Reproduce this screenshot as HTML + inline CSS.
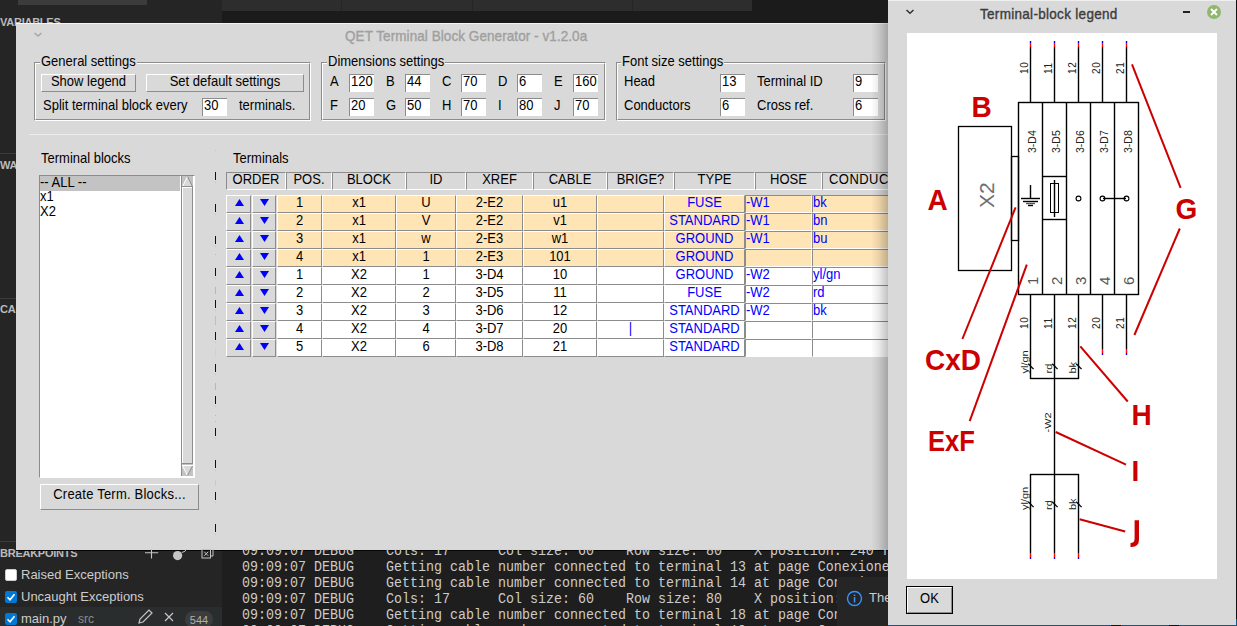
<!DOCTYPE html><html><head><meta charset="utf-8"><style>
html,body{margin:0;padding:0;}
body{width:1237px;height:626px;overflow:hidden;position:relative;background:#1e1e1e;font-family:"Liberation Sans",sans-serif;}
.a{position:absolute;box-sizing:content-box;}
.t{white-space:pre;font-size:13px;line-height:15px;color:#000;transform:scaleY(1.09);transform-origin:0 12px;}
.ev{position:absolute;left:1px;top:-1px;font-size:13px;line-height:15px;white-space:pre;transform:scaleY(1.09);transform-origin:0 12px;}
.mono{font-family:"Liberation Mono",monospace;}
</style></head><body>

<div class="a" style="left:0px;top:0px;width:222px;height:626px;background:#252526;"></div>
<div class="a" style="left:18px;top:0px;width:129px;height:5px;background:#3c3c3c;"></div>
<div class="a" style="left:222px;top:0px;width:1015px;height:23px;background:#1b1b1b;"></div>
<div class="a" style="left:222px;top:0px;width:530px;height:11px;background:#2d2d2d;"></div>
<div class="a" style="left:341px;top:0px;width:1px;height:11px;background:#252526;"></div>
<div class="a" style="left:472px;top:0px;width:1px;height:11px;background:#252526;"></div>
<div class="a" style="left:632px;top:0px;width:1px;height:11px;background:#252526;"></div>
<div class="a" style="left:0px;top:153px;width:222px;height:1px;background:#3a3a3a;"></div>
<div class="a" style="left:0px;top:298px;width:222px;height:1px;background:#3a3a3a;"></div>
<div class="a" style="left:0px;top:541px;width:222px;height:1px;background:#3a3a3a;"></div>
<div class="a t" style="left:0px;top:15px;color:#bbbbbb;font-size:11px;font-weight:700;letter-spacing:-0.25px;transform:none;">VARIABLES</div>
<div class="a t" style="left:0px;top:158px;color:#bbbbbb;font-size:11px;font-weight:700;letter-spacing:-0.25px;transform:none;">WATCH</div>
<div class="a t" style="left:0px;top:302px;color:#bbbbbb;font-size:11px;font-weight:700;letter-spacing:-0.25px;transform:none;">CALL STACK</div>
<div class="a t" style="left:0px;top:546px;color:#bbbbbb;font-size:11px;font-weight:700;letter-spacing:-0.25px;transform:none;">BREAKPOINTS</div>
<div class="a" style="left:16px;top:23px;width:872px;height:527px;background:#d9d9d9;"></div>
<div class="a" style="left:16px;top:550px;width:872px;height:1px;background:#050505;"></div>
<svg class="a" style="left:32px;top:30px" width="12" height="9"><polyline points="2.5,3 6,6 9.5,3" fill="none" stroke="#a8a8a8" stroke-width="1.6"/></svg>
<div class="a" style="left:16px;top:23px;width:872px;height:1px;background:#f4f4f4;"></div>
<div class="a t" style="left:345px;top:29px;color:#a0a0a0;font-size:13.5px;letter-spacing:0.07px;-webkit-text-stroke:0.35px #a0a0a0;">QET Terminal Block Generator - v1.2.0a</div>
<div class="a" style="left:34px;top:62px;width:275px;height:57px;border-top:1px solid #8c8c8c;border-left:1px solid #8c8c8c;border-right:1px solid #fff;border-bottom:1px solid #fff;"></div>
<div class="a" style="left:35px;top:63px;width:273px;height:55px;border-top:1px solid #fff;border-left:1px solid #fff;border-right:1px solid #8c8c8c;border-bottom:1px solid #8c8c8c;"></div>
<div class="a" style="left:321px;top:62px;width:283px;height:57px;border-top:1px solid #8c8c8c;border-left:1px solid #8c8c8c;border-right:1px solid #fff;border-bottom:1px solid #fff;"></div>
<div class="a" style="left:322px;top:63px;width:281px;height:55px;border-top:1px solid #fff;border-left:1px solid #fff;border-right:1px solid #8c8c8c;border-bottom:1px solid #8c8c8c;"></div>
<div class="a" style="left:616px;top:62px;width:268px;height:57px;border-top:1px solid #8c8c8c;border-left:1px solid #8c8c8c;border-right:1px solid #fff;border-bottom:1px solid #fff;"></div>
<div class="a" style="left:617px;top:63px;width:266px;height:55px;border-top:1px solid #fff;border-left:1px solid #fff;border-right:1px solid #8c8c8c;border-bottom:1px solid #8c8c8c;"></div>
<div class="a t" style="left:40px;top:54px;background:#d9d9d9;padding:0 1px;">General settings</div>
<div class="a t" style="left:327px;top:54px;background:#d9d9d9;padding:0 1px;">Dimensions settings</div>
<div class="a t" style="left:621px;top:54px;background:#d9d9d9;padding:0 1px;">Font size settings</div>
<div class="a" style="left:41px;top:74px;width:93px;height:16px;background:#d9d9d9;border-top:1px solid #fff;border-left:1px solid #fff;border-right:1px solid #8c8c8c;border-bottom:1px solid #8c8c8c;"><span class="t a" style="left:0;right:0;top:-1px;text-align:center">Show legend</span></div>
<div class="a" style="left:146px;top:74px;width:156px;height:16px;background:#d9d9d9;border-top:1px solid #fff;border-left:1px solid #fff;border-right:1px solid #8c8c8c;border-bottom:1px solid #8c8c8c;"><span class="t a" style="left:0;right:0;top:-1px;text-align:center">Set default settings</span></div>
<div class="a t" style="left:43px;top:98px;">Split terminal block every</div>
<div class="a" style="left:202px;top:98px;width:24px;height:17px;background:#fff;border-top:1px solid #8c8c8c;border-left:1px solid #8c8c8c;"><span class="ev">30</span></div>
<div class="a t" style="left:239px;top:98px;">terminals.</div>
<div class="a t" style="left:330px;top:74px;">A</div>
<div class="a" style="left:349px;top:74px;width:24px;height:17px;background:#fff;border-top:1px solid #8c8c8c;border-left:1px solid #8c8c8c;"><span class="ev">120</span></div>
<div class="a t" style="left:386px;top:74px;">B</div>
<div class="a" style="left:405px;top:74px;width:24px;height:17px;background:#fff;border-top:1px solid #8c8c8c;border-left:1px solid #8c8c8c;"><span class="ev">44</span></div>
<div class="a t" style="left:442px;top:74px;">C</div>
<div class="a" style="left:461px;top:74px;width:24px;height:17px;background:#fff;border-top:1px solid #8c8c8c;border-left:1px solid #8c8c8c;"><span class="ev">70</span></div>
<div class="a t" style="left:498px;top:74px;">D</div>
<div class="a" style="left:517px;top:74px;width:24px;height:17px;background:#fff;border-top:1px solid #8c8c8c;border-left:1px solid #8c8c8c;"><span class="ev">6</span></div>
<div class="a t" style="left:554px;top:74px;">E</div>
<div class="a" style="left:573px;top:74px;width:24px;height:17px;background:#fff;border-top:1px solid #8c8c8c;border-left:1px solid #8c8c8c;"><span class="ev">160</span></div>
<div class="a t" style="left:330px;top:98px;">F</div>
<div class="a" style="left:349px;top:98px;width:24px;height:17px;background:#fff;border-top:1px solid #8c8c8c;border-left:1px solid #8c8c8c;"><span class="ev">20</span></div>
<div class="a t" style="left:386px;top:98px;">G</div>
<div class="a" style="left:405px;top:98px;width:24px;height:17px;background:#fff;border-top:1px solid #8c8c8c;border-left:1px solid #8c8c8c;"><span class="ev">50</span></div>
<div class="a t" style="left:442px;top:98px;">H</div>
<div class="a" style="left:461px;top:98px;width:24px;height:17px;background:#fff;border-top:1px solid #8c8c8c;border-left:1px solid #8c8c8c;"><span class="ev">70</span></div>
<div class="a t" style="left:498px;top:98px;">I</div>
<div class="a" style="left:517px;top:98px;width:24px;height:17px;background:#fff;border-top:1px solid #8c8c8c;border-left:1px solid #8c8c8c;"><span class="ev">80</span></div>
<div class="a t" style="left:554px;top:98px;">J</div>
<div class="a" style="left:573px;top:98px;width:24px;height:17px;background:#fff;border-top:1px solid #8c8c8c;border-left:1px solid #8c8c8c;"><span class="ev">70</span></div>
<div class="a t" style="left:624px;top:74px;">Head</div>
<div class="a" style="left:720px;top:74px;width:24px;height:17px;background:#fff;border-top:1px solid #8c8c8c;border-left:1px solid #8c8c8c;"><span class="ev">13</span></div>
<div class="a t" style="left:757px;top:74px;">Terminal ID</div>
<div class="a" style="left:853px;top:74px;width:24px;height:17px;background:#fff;border-top:1px solid #8c8c8c;border-left:1px solid #8c8c8c;"><span class="ev">9</span></div>
<div class="a t" style="left:624px;top:98px;">Conductors</div>
<div class="a" style="left:720px;top:98px;width:24px;height:17px;background:#fff;border-top:1px solid #8c8c8c;border-left:1px solid #8c8c8c;"><span class="ev">6</span></div>
<div class="a t" style="left:757px;top:98px;">Cross ref.</div>
<div class="a" style="left:853px;top:98px;width:24px;height:17px;background:#fff;border-top:1px solid #8c8c8c;border-left:1px solid #8c8c8c;"><span class="ev">6</span></div>
<div class="a" style="left:29px;top:134px;width:859px;height:1px;background:#ededed;"></div>
<div class="a t" style="left:41px;top:151px;">Terminal blocks</div>
<div class="a" style="left:39px;top:175px;width:154px;height:301px;border-top:1px solid #8c8c8c;border-left:1px solid #8c8c8c;border-right:1px solid #fff;border-bottom:1px solid #fff;background:#fff;"></div>
<div class="a" style="left:40px;top:176px;width:140px;height:15px;background:#c3c3c3;"></div>
<div class="a t" style="left:40px;top:175px;">-- ALL --</div>
<div class="a t" style="left:40px;top:189px;">x1</div>
<div class="a t" style="left:40px;top:204px;">X2</div>
<div class="a" style="left:181px;top:176px;width:1px;height:300px;background:#8c8c8c;"></div>
<div class="a" style="left:182px;top:176px;width:11px;height:300px;background:#c3c3c3;"></div>
<svg class="a" style="left:182px;top:176px" width="11" height="300" viewBox="0 0 11 300">
<polygon points="0.5,10 5.5,0.5 10.5,10" fill="#d9d9d9"/>
<polyline points="0.5,10.5 5.5,0.5" stroke="#fff" stroke-width="1" fill="none"/>
<polyline points="5.5,0.5 10.5,10.5" stroke="#8c8c8c" stroke-width="1" fill="none"/>
<line x1="0" y1="10.5" x2="11" y2="10.5" stroke="#8c8c8c" stroke-width="1"/>
<rect x="0" y="11" width="11" height="277" fill="#d9d9d9"/>
<line x1="0" y1="11.5" x2="11" y2="11.5" stroke="#fff"/>
<line x1="0.5" y1="11" x2="0.5" y2="288" stroke="#fff"/>
<line x1="10.5" y1="11" x2="10.5" y2="288" stroke="#8c8c8c"/>
<line x1="0" y1="287.5" x2="11" y2="287.5" stroke="#8c8c8c"/>
<line x1="0" y1="289.5" x2="11" y2="289.5" stroke="#fff"/>
<polygon points="0.5,290 10.5,290 5.5,299.5" fill="#d9d9d9"/>
<polyline points="0.5,290 5.5,299.5" stroke="#fff" fill="none"/>
<polyline points="10.5,290 5.5,299.5" stroke="#8c8c8c" fill="none"/>
</svg>
<div class="a" style="left:40px;top:484px;width:157px;height:24px;background:#d9d9d9;border-top:1px solid #fff;border-left:1px solid #fff;border-right:1px solid #8c8c8c;border-bottom:1px solid #8c8c8c;"><span class="t a" style="left:0;right:0;top:2px;text-align:center;letter-spacing:0.22px">Create Term. Blocks...</span></div>
<div class="a" style="left:215px;top:172px;width:1px;height:8px;background:#111;"></div>
<div class="a" style="left:215px;top:182px;width:1px;height:1px;background:#bdbdbd;"></div>
<div class="a" style="left:215px;top:204px;width:1px;height:8px;background:#111;"></div>
<div class="a" style="left:215px;top:214px;width:1px;height:1px;background:#bdbdbd;"></div>
<div class="a" style="left:215px;top:236px;width:1px;height:8px;background:#111;"></div>
<div class="a" style="left:215px;top:246px;width:1px;height:1px;background:#bdbdbd;"></div>
<div class="a" style="left:215px;top:268px;width:1px;height:8px;background:#111;"></div>
<div class="a" style="left:215px;top:278px;width:1px;height:1px;background:#bdbdbd;"></div>
<div class="a" style="left:215px;top:300px;width:1px;height:8px;background:#111;"></div>
<div class="a" style="left:215px;top:310px;width:1px;height:1px;background:#bdbdbd;"></div>
<div class="a" style="left:215px;top:332px;width:1px;height:8px;background:#111;"></div>
<div class="a" style="left:215px;top:342px;width:1px;height:1px;background:#bdbdbd;"></div>
<div class="a" style="left:215px;top:364px;width:1px;height:8px;background:#111;"></div>
<div class="a" style="left:215px;top:374px;width:1px;height:1px;background:#bdbdbd;"></div>
<div class="a" style="left:215px;top:396px;width:1px;height:8px;background:#111;"></div>
<div class="a" style="left:215px;top:406px;width:1px;height:1px;background:#bdbdbd;"></div>
<div class="a" style="left:215px;top:428px;width:1px;height:8px;background:#111;"></div>
<div class="a" style="left:215px;top:438px;width:1px;height:1px;background:#bdbdbd;"></div>
<div class="a" style="left:215px;top:460px;width:1px;height:8px;background:#111;"></div>
<div class="a" style="left:215px;top:470px;width:1px;height:1px;background:#bdbdbd;"></div>
<div class="a" style="left:215px;top:492px;width:1px;height:8px;background:#111;"></div>
<div class="a" style="left:215px;top:502px;width:1px;height:1px;background:#bdbdbd;"></div>
<div class="a" style="left:215px;top:524px;width:1px;height:8px;background:#111;"></div>
<div class="a" style="left:215px;top:534px;width:1px;height:1px;background:#bdbdbd;"></div>
<div class="a" style="left:215px;top:150px;width:1px;height:1px;background:#c4c4c4;"></div>
<div class="a" style="left:215px;top:254px;width:1px;height:1px;background:#c8b4a8;"></div>
<div class="a" style="left:215px;top:287px;width:1px;height:7px;background:#c2b2ac;"></div>
<div class="a" style="left:215px;top:316px;width:1px;height:9px;background:#b4c0d2;"></div>
<div class="a" style="left:215px;top:348px;width:1px;height:9px;background:#d4d2c4;"></div>
<div class="a" style="left:215px;top:383px;width:1px;height:7px;background:#c6b4ac;"></div>
<div class="a" style="left:215px;top:415px;width:1px;height:1px;background:#b8b8b8;"></div>
<div class="a" style="left:215px;top:421px;width:1px;height:1px;background:#b8b8b8;"></div>
<div class="a" style="left:215px;top:480px;width:1px;height:6px;background:#c0ccd8;"></div>
<div class="a t" style="left:233px;top:151px;">Terminals</div>
<div class="a" style="left:226px;top:172px;width:58px;height:16px;background:#d9d9d9;border-top:1px solid #8c8c8c;border-left:1px solid #8c8c8c;border-right:1px solid #fff;border-bottom:1px solid #fff;"><span class="t a" style="left:0;right:0;top:-1px;text-align:center">ORDER</span></div>
<div class="a" style="left:286px;top:172px;width:44px;height:16px;background:#d9d9d9;border-top:1px solid #8c8c8c;border-left:1px solid #8c8c8c;border-right:1px solid #fff;border-bottom:1px solid #fff;"><span class="t a" style="left:0;right:0;top:-1px;text-align:center">POS.</span></div>
<div class="a" style="left:332px;top:172px;width:72px;height:16px;background:#d9d9d9;border-top:1px solid #8c8c8c;border-left:1px solid #8c8c8c;border-right:1px solid #fff;border-bottom:1px solid #fff;"><span class="t a" style="left:0;right:0;top:-1px;text-align:center">BLOCK</span></div>
<div class="a" style="left:406px;top:172px;width:58px;height:16px;background:#d9d9d9;border-top:1px solid #8c8c8c;border-left:1px solid #8c8c8c;border-right:1px solid #fff;border-bottom:1px solid #fff;"><span class="t a" style="left:0;right:0;top:-1px;text-align:center">ID</span></div>
<div class="a" style="left:466px;top:172px;width:65px;height:16px;background:#d9d9d9;border-top:1px solid #8c8c8c;border-left:1px solid #8c8c8c;border-right:1px solid #fff;border-bottom:1px solid #fff;"><span class="t a" style="left:0;right:0;top:-1px;text-align:center">XREF</span></div>
<div class="a" style="left:533px;top:172px;width:72px;height:16px;background:#d9d9d9;border-top:1px solid #8c8c8c;border-left:1px solid #8c8c8c;border-right:1px solid #fff;border-bottom:1px solid #fff;"><span class="t a" style="left:0;right:0;top:-1px;text-align:center">CABLE</span></div>
<div class="a" style="left:607px;top:172px;width:65px;height:16px;background:#d9d9d9;border-top:1px solid #8c8c8c;border-left:1px solid #8c8c8c;border-right:1px solid #fff;border-bottom:1px solid #fff;"><span class="t a" style="left:0;right:0;top:-1px;text-align:center">BRIGE?</span></div>
<div class="a" style="left:674px;top:172px;width:79px;height:16px;background:#d9d9d9;border-top:1px solid #8c8c8c;border-left:1px solid #8c8c8c;border-right:1px solid #fff;border-bottom:1px solid #fff;"><span class="t a" style="left:0;right:0;top:-1px;text-align:center">TYPE</span></div>
<div class="a" style="left:755px;top:172px;width:65px;height:16px;background:#d9d9d9;border-top:1px solid #8c8c8c;border-left:1px solid #8c8c8c;border-right:1px solid #fff;border-bottom:1px solid #fff;"><span class="t a" style="left:0;right:0;top:-1px;text-align:center">HOSE</span></div>
<div class="a" style="left:822px;top:172px;width:77px;height:16px;background:#d9d9d9;border-top:1px solid #8c8c8c;border-left:1px solid #8c8c8c;border-right:1px solid #fff;border-bottom:1px solid #fff;"><span class="t a" style="left:6px;top:-1px;letter-spacing:0.45px">CONDUCTOR</span></div>
<div class="a" style="left:226px;top:195px;width:23px;height:16px;background:#d9d9d9;border-top:1px solid #fff;border-left:1px solid #fff;border-right:1px solid #8c8c8c;border-bottom:1px solid #8c8c8c;"><svg class="a" style="left:8px;top:3px" width="9" height="8"><polygon points="0,7 4.5,0 9,7" fill="#0000ff"/></svg></div>
<div class="a" style="left:252px;top:195px;width:22px;height:16px;background:#d9d9d9;border-top:1px solid #fff;border-left:1px solid #fff;border-right:1px solid #8c8c8c;border-bottom:1px solid #8c8c8c;"><svg class="a" style="left:7px;top:3px" width="9" height="8"><polygon points="0,0 9,0 4.5,7" fill="#0000ff"/></svg></div>
<div class="a" style="left:277px;top:195px;width:43px;height:16px;background:#ffe4b5;border-top:1px solid #fff;border-left:1px solid #fff;border-right:1px solid #8c8c8c;border-bottom:1px solid #8c8c8c;"><span class="t a" style="left:0;right:0;top:-1px;text-align:center;color:#000">1</span></div>
<div class="a" style="left:322px;top:195px;width:72px;height:16px;background:#ffe4b5;border-top:1px solid #fff;border-left:1px solid #fff;border-right:1px solid #8c8c8c;border-bottom:1px solid #8c8c8c;"><span class="t a" style="left:0;right:0;top:-1px;text-align:center;color:#000">x1</span></div>
<div class="a" style="left:396px;top:195px;width:58px;height:16px;background:#ffe4b5;border-top:1px solid #fff;border-left:1px solid #fff;border-right:1px solid #8c8c8c;border-bottom:1px solid #8c8c8c;"><span class="t a" style="left:0;right:0;top:-1px;text-align:center;color:#000">U</span></div>
<div class="a" style="left:456px;top:195px;width:65px;height:16px;background:#ffe4b5;border-top:1px solid #fff;border-left:1px solid #fff;border-right:1px solid #8c8c8c;border-bottom:1px solid #8c8c8c;"><span class="t a" style="left:0;right:0;top:-1px;text-align:center;color:#000">2-E2</span></div>
<div class="a" style="left:523px;top:195px;width:72px;height:16px;background:#ffe4b5;border-top:1px solid #fff;border-left:1px solid #fff;border-right:1px solid #8c8c8c;border-bottom:1px solid #8c8c8c;"><span class="t a" style="left:0;right:0;top:-1px;text-align:center;color:#000">u1</span></div>
<div class="a" style="left:597px;top:195px;width:65px;height:16px;background:#ffe4b5;border-top:1px solid #fff;border-left:1px solid #fff;border-right:1px solid #8c8c8c;border-bottom:1px solid #8c8c8c;"><span class="t a" style="left:0;right:0;top:-1px;text-align:center;color:#0000ff"></span></div>
<div class="a" style="left:664px;top:195px;width:79px;height:16px;background:#ffe4b5;border-top:1px solid #fff;border-left:1px solid #fff;border-right:1px solid #8c8c8c;border-bottom:1px solid #8c8c8c;"><span class="t a" style="left:0;right:0;top:-1px;text-align:center;color:#0000ff">FUSE</span></div>
<div class="a" style="left:745px;top:195px;width:65px;height:16px;background:#ffe4b5;border-top:1px solid #8c8c8c;border-left:1px solid #8c8c8c;border-right:1px solid #fff;border-bottom:1px solid #fff;"><span class="t a" style="left:0px;top:-1px;color:#0000ff">-W1</span></div>
<div class="a" style="left:812px;top:195px;width:87px;height:16px;background:#ffe4b5;border-top:1px solid #8c8c8c;border-left:1px solid #8c8c8c;border-right:1px solid #fff;border-bottom:1px solid #fff;"><span class="t a" style="left:0px;top:-1px;color:#0000ff">bk</span></div>
<div class="a" style="left:226px;top:213px;width:23px;height:16px;background:#d9d9d9;border-top:1px solid #fff;border-left:1px solid #fff;border-right:1px solid #8c8c8c;border-bottom:1px solid #8c8c8c;"><svg class="a" style="left:8px;top:3px" width="9" height="8"><polygon points="0,7 4.5,0 9,7" fill="#0000ff"/></svg></div>
<div class="a" style="left:252px;top:213px;width:22px;height:16px;background:#d9d9d9;border-top:1px solid #fff;border-left:1px solid #fff;border-right:1px solid #8c8c8c;border-bottom:1px solid #8c8c8c;"><svg class="a" style="left:7px;top:3px" width="9" height="8"><polygon points="0,0 9,0 4.5,7" fill="#0000ff"/></svg></div>
<div class="a" style="left:277px;top:213px;width:43px;height:16px;background:#ffe4b5;border-top:1px solid #fff;border-left:1px solid #fff;border-right:1px solid #8c8c8c;border-bottom:1px solid #8c8c8c;"><span class="t a" style="left:0;right:0;top:-1px;text-align:center;color:#000">2</span></div>
<div class="a" style="left:322px;top:213px;width:72px;height:16px;background:#ffe4b5;border-top:1px solid #fff;border-left:1px solid #fff;border-right:1px solid #8c8c8c;border-bottom:1px solid #8c8c8c;"><span class="t a" style="left:0;right:0;top:-1px;text-align:center;color:#000">x1</span></div>
<div class="a" style="left:396px;top:213px;width:58px;height:16px;background:#ffe4b5;border-top:1px solid #fff;border-left:1px solid #fff;border-right:1px solid #8c8c8c;border-bottom:1px solid #8c8c8c;"><span class="t a" style="left:0;right:0;top:-1px;text-align:center;color:#000">V</span></div>
<div class="a" style="left:456px;top:213px;width:65px;height:16px;background:#ffe4b5;border-top:1px solid #fff;border-left:1px solid #fff;border-right:1px solid #8c8c8c;border-bottom:1px solid #8c8c8c;"><span class="t a" style="left:0;right:0;top:-1px;text-align:center;color:#000">2-E2</span></div>
<div class="a" style="left:523px;top:213px;width:72px;height:16px;background:#ffe4b5;border-top:1px solid #fff;border-left:1px solid #fff;border-right:1px solid #8c8c8c;border-bottom:1px solid #8c8c8c;"><span class="t a" style="left:0;right:0;top:-1px;text-align:center;color:#000">v1</span></div>
<div class="a" style="left:597px;top:213px;width:65px;height:16px;background:#ffe4b5;border-top:1px solid #fff;border-left:1px solid #fff;border-right:1px solid #8c8c8c;border-bottom:1px solid #8c8c8c;"><span class="t a" style="left:0;right:0;top:-1px;text-align:center;color:#0000ff"></span></div>
<div class="a" style="left:664px;top:213px;width:79px;height:16px;background:#ffe4b5;border-top:1px solid #fff;border-left:1px solid #fff;border-right:1px solid #8c8c8c;border-bottom:1px solid #8c8c8c;"><span class="t a" style="left:0;right:0;top:-1px;text-align:center;color:#0000ff">STANDARD</span></div>
<div class="a" style="left:745px;top:213px;width:65px;height:16px;background:#ffe4b5;border-top:1px solid #8c8c8c;border-left:1px solid #8c8c8c;border-right:1px solid #fff;border-bottom:1px solid #fff;"><span class="t a" style="left:0px;top:-1px;color:#0000ff">-W1</span></div>
<div class="a" style="left:812px;top:213px;width:87px;height:16px;background:#ffe4b5;border-top:1px solid #8c8c8c;border-left:1px solid #8c8c8c;border-right:1px solid #fff;border-bottom:1px solid #fff;"><span class="t a" style="left:0px;top:-1px;color:#0000ff">bn</span></div>
<div class="a" style="left:226px;top:231px;width:23px;height:16px;background:#d9d9d9;border-top:1px solid #fff;border-left:1px solid #fff;border-right:1px solid #8c8c8c;border-bottom:1px solid #8c8c8c;"><svg class="a" style="left:8px;top:3px" width="9" height="8"><polygon points="0,7 4.5,0 9,7" fill="#0000ff"/></svg></div>
<div class="a" style="left:252px;top:231px;width:22px;height:16px;background:#d9d9d9;border-top:1px solid #fff;border-left:1px solid #fff;border-right:1px solid #8c8c8c;border-bottom:1px solid #8c8c8c;"><svg class="a" style="left:7px;top:3px" width="9" height="8"><polygon points="0,0 9,0 4.5,7" fill="#0000ff"/></svg></div>
<div class="a" style="left:277px;top:231px;width:43px;height:16px;background:#ffe4b5;border-top:1px solid #fff;border-left:1px solid #fff;border-right:1px solid #8c8c8c;border-bottom:1px solid #8c8c8c;"><span class="t a" style="left:0;right:0;top:-1px;text-align:center;color:#000">3</span></div>
<div class="a" style="left:322px;top:231px;width:72px;height:16px;background:#ffe4b5;border-top:1px solid #fff;border-left:1px solid #fff;border-right:1px solid #8c8c8c;border-bottom:1px solid #8c8c8c;"><span class="t a" style="left:0;right:0;top:-1px;text-align:center;color:#000">x1</span></div>
<div class="a" style="left:396px;top:231px;width:58px;height:16px;background:#ffe4b5;border-top:1px solid #fff;border-left:1px solid #fff;border-right:1px solid #8c8c8c;border-bottom:1px solid #8c8c8c;"><span class="t a" style="left:0;right:0;top:-1px;text-align:center;color:#000">w</span></div>
<div class="a" style="left:456px;top:231px;width:65px;height:16px;background:#ffe4b5;border-top:1px solid #fff;border-left:1px solid #fff;border-right:1px solid #8c8c8c;border-bottom:1px solid #8c8c8c;"><span class="t a" style="left:0;right:0;top:-1px;text-align:center;color:#000">2-E3</span></div>
<div class="a" style="left:523px;top:231px;width:72px;height:16px;background:#ffe4b5;border-top:1px solid #fff;border-left:1px solid #fff;border-right:1px solid #8c8c8c;border-bottom:1px solid #8c8c8c;"><span class="t a" style="left:0;right:0;top:-1px;text-align:center;color:#000">w1</span></div>
<div class="a" style="left:597px;top:231px;width:65px;height:16px;background:#ffe4b5;border-top:1px solid #fff;border-left:1px solid #fff;border-right:1px solid #8c8c8c;border-bottom:1px solid #8c8c8c;"><span class="t a" style="left:0;right:0;top:-1px;text-align:center;color:#0000ff"></span></div>
<div class="a" style="left:664px;top:231px;width:79px;height:16px;background:#ffe4b5;border-top:1px solid #fff;border-left:1px solid #fff;border-right:1px solid #8c8c8c;border-bottom:1px solid #8c8c8c;"><span class="t a" style="left:0;right:0;top:-1px;text-align:center;color:#0000ff">GROUND</span></div>
<div class="a" style="left:745px;top:231px;width:65px;height:16px;background:#ffe4b5;border-top:1px solid #8c8c8c;border-left:1px solid #8c8c8c;border-right:1px solid #fff;border-bottom:1px solid #fff;"><span class="t a" style="left:0px;top:-1px;color:#0000ff">-W1</span></div>
<div class="a" style="left:812px;top:231px;width:87px;height:16px;background:#ffe4b5;border-top:1px solid #8c8c8c;border-left:1px solid #8c8c8c;border-right:1px solid #fff;border-bottom:1px solid #fff;"><span class="t a" style="left:0px;top:-1px;color:#0000ff">bu</span></div>
<div class="a" style="left:226px;top:249px;width:23px;height:16px;background:#d9d9d9;border-top:1px solid #fff;border-left:1px solid #fff;border-right:1px solid #8c8c8c;border-bottom:1px solid #8c8c8c;"><svg class="a" style="left:8px;top:3px" width="9" height="8"><polygon points="0,7 4.5,0 9,7" fill="#0000ff"/></svg></div>
<div class="a" style="left:252px;top:249px;width:22px;height:16px;background:#d9d9d9;border-top:1px solid #fff;border-left:1px solid #fff;border-right:1px solid #8c8c8c;border-bottom:1px solid #8c8c8c;"><svg class="a" style="left:7px;top:3px" width="9" height="8"><polygon points="0,0 9,0 4.5,7" fill="#0000ff"/></svg></div>
<div class="a" style="left:277px;top:249px;width:43px;height:16px;background:#ffe4b5;border-top:1px solid #fff;border-left:1px solid #fff;border-right:1px solid #8c8c8c;border-bottom:1px solid #8c8c8c;"><span class="t a" style="left:0;right:0;top:-1px;text-align:center;color:#000">4</span></div>
<div class="a" style="left:322px;top:249px;width:72px;height:16px;background:#ffe4b5;border-top:1px solid #fff;border-left:1px solid #fff;border-right:1px solid #8c8c8c;border-bottom:1px solid #8c8c8c;"><span class="t a" style="left:0;right:0;top:-1px;text-align:center;color:#000">x1</span></div>
<div class="a" style="left:396px;top:249px;width:58px;height:16px;background:#ffe4b5;border-top:1px solid #fff;border-left:1px solid #fff;border-right:1px solid #8c8c8c;border-bottom:1px solid #8c8c8c;"><span class="t a" style="left:0;right:0;top:-1px;text-align:center;color:#000">1</span></div>
<div class="a" style="left:456px;top:249px;width:65px;height:16px;background:#ffe4b5;border-top:1px solid #fff;border-left:1px solid #fff;border-right:1px solid #8c8c8c;border-bottom:1px solid #8c8c8c;"><span class="t a" style="left:0;right:0;top:-1px;text-align:center;color:#000">2-E3</span></div>
<div class="a" style="left:523px;top:249px;width:72px;height:16px;background:#ffe4b5;border-top:1px solid #fff;border-left:1px solid #fff;border-right:1px solid #8c8c8c;border-bottom:1px solid #8c8c8c;"><span class="t a" style="left:0;right:0;top:-1px;text-align:center;color:#000">101</span></div>
<div class="a" style="left:597px;top:249px;width:65px;height:16px;background:#ffe4b5;border-top:1px solid #fff;border-left:1px solid #fff;border-right:1px solid #8c8c8c;border-bottom:1px solid #8c8c8c;"><span class="t a" style="left:0;right:0;top:-1px;text-align:center;color:#0000ff"></span></div>
<div class="a" style="left:664px;top:249px;width:79px;height:16px;background:#ffe4b5;border-top:1px solid #fff;border-left:1px solid #fff;border-right:1px solid #8c8c8c;border-bottom:1px solid #8c8c8c;"><span class="t a" style="left:0;right:0;top:-1px;text-align:center;color:#0000ff">GROUND</span></div>
<div class="a" style="left:745px;top:249px;width:65px;height:16px;background:#ffe4b5;border-top:1px solid #8c8c8c;border-left:1px solid #8c8c8c;border-right:1px solid #fff;border-bottom:1px solid #fff;"><span class="t a" style="left:0px;top:-1px;color:#0000ff"></span></div>
<div class="a" style="left:812px;top:249px;width:87px;height:16px;background:#ffe4b5;border-top:1px solid #8c8c8c;border-left:1px solid #8c8c8c;border-right:1px solid #fff;border-bottom:1px solid #fff;"><span class="t a" style="left:0px;top:-1px;color:#0000ff"></span></div>
<div class="a" style="left:226px;top:267px;width:23px;height:16px;background:#d9d9d9;border-top:1px solid #fff;border-left:1px solid #fff;border-right:1px solid #8c8c8c;border-bottom:1px solid #8c8c8c;"><svg class="a" style="left:8px;top:3px" width="9" height="8"><polygon points="0,7 4.5,0 9,7" fill="#0000ff"/></svg></div>
<div class="a" style="left:252px;top:267px;width:22px;height:16px;background:#d9d9d9;border-top:1px solid #fff;border-left:1px solid #fff;border-right:1px solid #8c8c8c;border-bottom:1px solid #8c8c8c;"><svg class="a" style="left:7px;top:3px" width="9" height="8"><polygon points="0,0 9,0 4.5,7" fill="#0000ff"/></svg></div>
<div class="a" style="left:277px;top:267px;width:43px;height:16px;background:#fff;border-top:1px solid #fff;border-left:1px solid #fff;border-right:1px solid #8c8c8c;border-bottom:1px solid #8c8c8c;"><span class="t a" style="left:0;right:0;top:-1px;text-align:center;color:#000">1</span></div>
<div class="a" style="left:322px;top:267px;width:72px;height:16px;background:#fff;border-top:1px solid #fff;border-left:1px solid #fff;border-right:1px solid #8c8c8c;border-bottom:1px solid #8c8c8c;"><span class="t a" style="left:0;right:0;top:-1px;text-align:center;color:#000">X2</span></div>
<div class="a" style="left:396px;top:267px;width:58px;height:16px;background:#fff;border-top:1px solid #fff;border-left:1px solid #fff;border-right:1px solid #8c8c8c;border-bottom:1px solid #8c8c8c;"><span class="t a" style="left:0;right:0;top:-1px;text-align:center;color:#000">1</span></div>
<div class="a" style="left:456px;top:267px;width:65px;height:16px;background:#fff;border-top:1px solid #fff;border-left:1px solid #fff;border-right:1px solid #8c8c8c;border-bottom:1px solid #8c8c8c;"><span class="t a" style="left:0;right:0;top:-1px;text-align:center;color:#000">3-D4</span></div>
<div class="a" style="left:523px;top:267px;width:72px;height:16px;background:#fff;border-top:1px solid #fff;border-left:1px solid #fff;border-right:1px solid #8c8c8c;border-bottom:1px solid #8c8c8c;"><span class="t a" style="left:0;right:0;top:-1px;text-align:center;color:#000">10</span></div>
<div class="a" style="left:597px;top:267px;width:65px;height:16px;background:#fff;border-top:1px solid #fff;border-left:1px solid #fff;border-right:1px solid #8c8c8c;border-bottom:1px solid #8c8c8c;"><span class="t a" style="left:0;right:0;top:-1px;text-align:center;color:#0000ff"></span></div>
<div class="a" style="left:664px;top:267px;width:79px;height:16px;background:#fff;border-top:1px solid #fff;border-left:1px solid #fff;border-right:1px solid #8c8c8c;border-bottom:1px solid #8c8c8c;"><span class="t a" style="left:0;right:0;top:-1px;text-align:center;color:#0000ff">GROUND</span></div>
<div class="a" style="left:745px;top:267px;width:65px;height:16px;background:#fff;border-top:1px solid #8c8c8c;border-left:1px solid #8c8c8c;border-right:1px solid #fff;border-bottom:1px solid #fff;"><span class="t a" style="left:0px;top:-1px;color:#0000ff">-W2</span></div>
<div class="a" style="left:812px;top:267px;width:87px;height:16px;background:#fff;border-top:1px solid #8c8c8c;border-left:1px solid #8c8c8c;border-right:1px solid #fff;border-bottom:1px solid #fff;"><span class="t a" style="left:0px;top:-1px;color:#0000ff">yl/gn</span></div>
<div class="a" style="left:226px;top:285px;width:23px;height:16px;background:#d9d9d9;border-top:1px solid #fff;border-left:1px solid #fff;border-right:1px solid #8c8c8c;border-bottom:1px solid #8c8c8c;"><svg class="a" style="left:8px;top:3px" width="9" height="8"><polygon points="0,7 4.5,0 9,7" fill="#0000ff"/></svg></div>
<div class="a" style="left:252px;top:285px;width:22px;height:16px;background:#d9d9d9;border-top:1px solid #fff;border-left:1px solid #fff;border-right:1px solid #8c8c8c;border-bottom:1px solid #8c8c8c;"><svg class="a" style="left:7px;top:3px" width="9" height="8"><polygon points="0,0 9,0 4.5,7" fill="#0000ff"/></svg></div>
<div class="a" style="left:277px;top:285px;width:43px;height:16px;background:#fff;border-top:1px solid #fff;border-left:1px solid #fff;border-right:1px solid #8c8c8c;border-bottom:1px solid #8c8c8c;"><span class="t a" style="left:0;right:0;top:-1px;text-align:center;color:#000">2</span></div>
<div class="a" style="left:322px;top:285px;width:72px;height:16px;background:#fff;border-top:1px solid #fff;border-left:1px solid #fff;border-right:1px solid #8c8c8c;border-bottom:1px solid #8c8c8c;"><span class="t a" style="left:0;right:0;top:-1px;text-align:center;color:#000">X2</span></div>
<div class="a" style="left:396px;top:285px;width:58px;height:16px;background:#fff;border-top:1px solid #fff;border-left:1px solid #fff;border-right:1px solid #8c8c8c;border-bottom:1px solid #8c8c8c;"><span class="t a" style="left:0;right:0;top:-1px;text-align:center;color:#000">2</span></div>
<div class="a" style="left:456px;top:285px;width:65px;height:16px;background:#fff;border-top:1px solid #fff;border-left:1px solid #fff;border-right:1px solid #8c8c8c;border-bottom:1px solid #8c8c8c;"><span class="t a" style="left:0;right:0;top:-1px;text-align:center;color:#000">3-D5</span></div>
<div class="a" style="left:523px;top:285px;width:72px;height:16px;background:#fff;border-top:1px solid #fff;border-left:1px solid #fff;border-right:1px solid #8c8c8c;border-bottom:1px solid #8c8c8c;"><span class="t a" style="left:0;right:0;top:-1px;text-align:center;color:#000">11</span></div>
<div class="a" style="left:597px;top:285px;width:65px;height:16px;background:#fff;border-top:1px solid #fff;border-left:1px solid #fff;border-right:1px solid #8c8c8c;border-bottom:1px solid #8c8c8c;"><span class="t a" style="left:0;right:0;top:-1px;text-align:center;color:#0000ff"></span></div>
<div class="a" style="left:664px;top:285px;width:79px;height:16px;background:#fff;border-top:1px solid #fff;border-left:1px solid #fff;border-right:1px solid #8c8c8c;border-bottom:1px solid #8c8c8c;"><span class="t a" style="left:0;right:0;top:-1px;text-align:center;color:#0000ff">FUSE</span></div>
<div class="a" style="left:745px;top:285px;width:65px;height:16px;background:#fff;border-top:1px solid #8c8c8c;border-left:1px solid #8c8c8c;border-right:1px solid #fff;border-bottom:1px solid #fff;"><span class="t a" style="left:0px;top:-1px;color:#0000ff">-W2</span></div>
<div class="a" style="left:812px;top:285px;width:87px;height:16px;background:#fff;border-top:1px solid #8c8c8c;border-left:1px solid #8c8c8c;border-right:1px solid #fff;border-bottom:1px solid #fff;"><span class="t a" style="left:0px;top:-1px;color:#0000ff">rd</span></div>
<div class="a" style="left:226px;top:303px;width:23px;height:16px;background:#d9d9d9;border-top:1px solid #fff;border-left:1px solid #fff;border-right:1px solid #8c8c8c;border-bottom:1px solid #8c8c8c;"><svg class="a" style="left:8px;top:3px" width="9" height="8"><polygon points="0,7 4.5,0 9,7" fill="#0000ff"/></svg></div>
<div class="a" style="left:252px;top:303px;width:22px;height:16px;background:#d9d9d9;border-top:1px solid #fff;border-left:1px solid #fff;border-right:1px solid #8c8c8c;border-bottom:1px solid #8c8c8c;"><svg class="a" style="left:7px;top:3px" width="9" height="8"><polygon points="0,0 9,0 4.5,7" fill="#0000ff"/></svg></div>
<div class="a" style="left:277px;top:303px;width:43px;height:16px;background:#fff;border-top:1px solid #fff;border-left:1px solid #fff;border-right:1px solid #8c8c8c;border-bottom:1px solid #8c8c8c;"><span class="t a" style="left:0;right:0;top:-1px;text-align:center;color:#000">3</span></div>
<div class="a" style="left:322px;top:303px;width:72px;height:16px;background:#fff;border-top:1px solid #fff;border-left:1px solid #fff;border-right:1px solid #8c8c8c;border-bottom:1px solid #8c8c8c;"><span class="t a" style="left:0;right:0;top:-1px;text-align:center;color:#000">X2</span></div>
<div class="a" style="left:396px;top:303px;width:58px;height:16px;background:#fff;border-top:1px solid #fff;border-left:1px solid #fff;border-right:1px solid #8c8c8c;border-bottom:1px solid #8c8c8c;"><span class="t a" style="left:0;right:0;top:-1px;text-align:center;color:#000">3</span></div>
<div class="a" style="left:456px;top:303px;width:65px;height:16px;background:#fff;border-top:1px solid #fff;border-left:1px solid #fff;border-right:1px solid #8c8c8c;border-bottom:1px solid #8c8c8c;"><span class="t a" style="left:0;right:0;top:-1px;text-align:center;color:#000">3-D6</span></div>
<div class="a" style="left:523px;top:303px;width:72px;height:16px;background:#fff;border-top:1px solid #fff;border-left:1px solid #fff;border-right:1px solid #8c8c8c;border-bottom:1px solid #8c8c8c;"><span class="t a" style="left:0;right:0;top:-1px;text-align:center;color:#000">12</span></div>
<div class="a" style="left:597px;top:303px;width:65px;height:16px;background:#fff;border-top:1px solid #fff;border-left:1px solid #fff;border-right:1px solid #8c8c8c;border-bottom:1px solid #8c8c8c;"><span class="t a" style="left:0;right:0;top:-1px;text-align:center;color:#0000ff"></span></div>
<div class="a" style="left:664px;top:303px;width:79px;height:16px;background:#fff;border-top:1px solid #fff;border-left:1px solid #fff;border-right:1px solid #8c8c8c;border-bottom:1px solid #8c8c8c;"><span class="t a" style="left:0;right:0;top:-1px;text-align:center;color:#0000ff">STANDARD</span></div>
<div class="a" style="left:745px;top:303px;width:65px;height:16px;background:#fff;border-top:1px solid #8c8c8c;border-left:1px solid #8c8c8c;border-right:1px solid #fff;border-bottom:1px solid #fff;"><span class="t a" style="left:0px;top:-1px;color:#0000ff">-W2</span></div>
<div class="a" style="left:812px;top:303px;width:87px;height:16px;background:#fff;border-top:1px solid #8c8c8c;border-left:1px solid #8c8c8c;border-right:1px solid #fff;border-bottom:1px solid #fff;"><span class="t a" style="left:0px;top:-1px;color:#0000ff">bk</span></div>
<div class="a" style="left:226px;top:321px;width:23px;height:16px;background:#d9d9d9;border-top:1px solid #fff;border-left:1px solid #fff;border-right:1px solid #8c8c8c;border-bottom:1px solid #8c8c8c;"><svg class="a" style="left:8px;top:3px" width="9" height="8"><polygon points="0,7 4.5,0 9,7" fill="#0000ff"/></svg></div>
<div class="a" style="left:252px;top:321px;width:22px;height:16px;background:#d9d9d9;border-top:1px solid #fff;border-left:1px solid #fff;border-right:1px solid #8c8c8c;border-bottom:1px solid #8c8c8c;"><svg class="a" style="left:7px;top:3px" width="9" height="8"><polygon points="0,0 9,0 4.5,7" fill="#0000ff"/></svg></div>
<div class="a" style="left:277px;top:321px;width:43px;height:16px;background:#fff;border-top:1px solid #fff;border-left:1px solid #fff;border-right:1px solid #8c8c8c;border-bottom:1px solid #8c8c8c;"><span class="t a" style="left:0;right:0;top:-1px;text-align:center;color:#000">4</span></div>
<div class="a" style="left:322px;top:321px;width:72px;height:16px;background:#fff;border-top:1px solid #fff;border-left:1px solid #fff;border-right:1px solid #8c8c8c;border-bottom:1px solid #8c8c8c;"><span class="t a" style="left:0;right:0;top:-1px;text-align:center;color:#000">X2</span></div>
<div class="a" style="left:396px;top:321px;width:58px;height:16px;background:#fff;border-top:1px solid #fff;border-left:1px solid #fff;border-right:1px solid #8c8c8c;border-bottom:1px solid #8c8c8c;"><span class="t a" style="left:0;right:0;top:-1px;text-align:center;color:#000">4</span></div>
<div class="a" style="left:456px;top:321px;width:65px;height:16px;background:#fff;border-top:1px solid #fff;border-left:1px solid #fff;border-right:1px solid #8c8c8c;border-bottom:1px solid #8c8c8c;"><span class="t a" style="left:0;right:0;top:-1px;text-align:center;color:#000">3-D7</span></div>
<div class="a" style="left:523px;top:321px;width:72px;height:16px;background:#fff;border-top:1px solid #fff;border-left:1px solid #fff;border-right:1px solid #8c8c8c;border-bottom:1px solid #8c8c8c;"><span class="t a" style="left:0;right:0;top:-1px;text-align:center;color:#000">20</span></div>
<div class="a" style="left:597px;top:321px;width:65px;height:16px;background:#fff;border-top:1px solid #fff;border-left:1px solid #fff;border-right:1px solid #8c8c8c;border-bottom:1px solid #8c8c8c;"><span class="t a" style="left:0;right:0;top:-1px;text-align:center;color:#0000ff">|</span></div>
<div class="a" style="left:664px;top:321px;width:79px;height:16px;background:#fff;border-top:1px solid #fff;border-left:1px solid #fff;border-right:1px solid #8c8c8c;border-bottom:1px solid #8c8c8c;"><span class="t a" style="left:0;right:0;top:-1px;text-align:center;color:#0000ff">STANDARD</span></div>
<div class="a" style="left:745px;top:321px;width:65px;height:16px;background:#fff;border-top:1px solid #8c8c8c;border-left:1px solid #8c8c8c;border-right:1px solid #fff;border-bottom:1px solid #fff;"><span class="t a" style="left:0px;top:-1px;color:#0000ff"></span></div>
<div class="a" style="left:812px;top:321px;width:87px;height:16px;background:#fff;border-top:1px solid #8c8c8c;border-left:1px solid #8c8c8c;border-right:1px solid #fff;border-bottom:1px solid #fff;"><span class="t a" style="left:0px;top:-1px;color:#0000ff"></span></div>
<div class="a" style="left:226px;top:339px;width:23px;height:16px;background:#d9d9d9;border-top:1px solid #fff;border-left:1px solid #fff;border-right:1px solid #8c8c8c;border-bottom:1px solid #8c8c8c;"><svg class="a" style="left:8px;top:3px" width="9" height="8"><polygon points="0,7 4.5,0 9,7" fill="#0000ff"/></svg></div>
<div class="a" style="left:252px;top:339px;width:22px;height:16px;background:#d9d9d9;border-top:1px solid #fff;border-left:1px solid #fff;border-right:1px solid #8c8c8c;border-bottom:1px solid #8c8c8c;"><svg class="a" style="left:7px;top:3px" width="9" height="8"><polygon points="0,0 9,0 4.5,7" fill="#0000ff"/></svg></div>
<div class="a" style="left:277px;top:339px;width:43px;height:16px;background:#fff;border-top:1px solid #fff;border-left:1px solid #fff;border-right:1px solid #8c8c8c;border-bottom:1px solid #8c8c8c;"><span class="t a" style="left:0;right:0;top:-1px;text-align:center;color:#000">5</span></div>
<div class="a" style="left:322px;top:339px;width:72px;height:16px;background:#fff;border-top:1px solid #fff;border-left:1px solid #fff;border-right:1px solid #8c8c8c;border-bottom:1px solid #8c8c8c;"><span class="t a" style="left:0;right:0;top:-1px;text-align:center;color:#000">X2</span></div>
<div class="a" style="left:396px;top:339px;width:58px;height:16px;background:#fff;border-top:1px solid #fff;border-left:1px solid #fff;border-right:1px solid #8c8c8c;border-bottom:1px solid #8c8c8c;"><span class="t a" style="left:0;right:0;top:-1px;text-align:center;color:#000">6</span></div>
<div class="a" style="left:456px;top:339px;width:65px;height:16px;background:#fff;border-top:1px solid #fff;border-left:1px solid #fff;border-right:1px solid #8c8c8c;border-bottom:1px solid #8c8c8c;"><span class="t a" style="left:0;right:0;top:-1px;text-align:center;color:#000">3-D8</span></div>
<div class="a" style="left:523px;top:339px;width:72px;height:16px;background:#fff;border-top:1px solid #fff;border-left:1px solid #fff;border-right:1px solid #8c8c8c;border-bottom:1px solid #8c8c8c;"><span class="t a" style="left:0;right:0;top:-1px;text-align:center;color:#000">21</span></div>
<div class="a" style="left:597px;top:339px;width:65px;height:16px;background:#fff;border-top:1px solid #fff;border-left:1px solid #fff;border-right:1px solid #8c8c8c;border-bottom:1px solid #8c8c8c;"><span class="t a" style="left:0;right:0;top:-1px;text-align:center;color:#0000ff"></span></div>
<div class="a" style="left:664px;top:339px;width:79px;height:16px;background:#fff;border-top:1px solid #fff;border-left:1px solid #fff;border-right:1px solid #8c8c8c;border-bottom:1px solid #8c8c8c;"><span class="t a" style="left:0;right:0;top:-1px;text-align:center;color:#0000ff">STANDARD</span></div>
<div class="a" style="left:745px;top:339px;width:65px;height:16px;background:#fff;border-top:1px solid #8c8c8c;border-left:1px solid #8c8c8c;border-right:1px solid #fff;border-bottom:1px solid #fff;"><span class="t a" style="left:0px;top:-1px;color:#0000ff"></span></div>
<div class="a" style="left:812px;top:339px;width:87px;height:16px;background:#fff;border-top:1px solid #8c8c8c;border-left:1px solid #8c8c8c;border-right:1px solid #fff;border-bottom:1px solid #fff;"><span class="t a" style="left:0px;top:-1px;color:#0000ff"></span></div>
<div class="a" style="left:871px;top:23px;width:17px;height:528px;background:linear-gradient(to right, rgba(0,0,0,0) 0%, rgba(0,0,0,0.08) 45%, rgba(0,0,0,0.24) 100%);"></div>
<div class="a" style="left:222px;top:549px;width:1015px;height:77px;overflow:hidden">
<div class="a mono" style="left:20px;top:-5px;font-size:13.33px;line-height:16px;color:#cccccc;white-space:pre;transform:scaleY(1.09);transform-origin:0 12.6px">09:09:07 DEBUG    Cols: 17      Col size: 60    Row size: 80    X position: 240 f</div>
<div class="a mono" style="left:20px;top:11px;font-size:13.33px;line-height:16px;color:#cccccc;white-space:pre;transform:scaleY(1.09);transform-origin:0 12.6px">09:09:07 DEBUG    Getting cable number connected to terminal 13 at page Conexiones</div>
<div class="a mono" style="left:20px;top:27px;font-size:13.33px;line-height:16px;color:#cccccc;white-space:pre;transform:scaleY(1.09);transform-origin:0 12.6px">09:09:07 DEBUG    Getting cable number connected to terminal 14 at page Conexiones</div>
<div class="a mono" style="left:20px;top:43px;font-size:13.33px;line-height:16px;color:#cccccc;white-space:pre;transform:scaleY(1.09);transform-origin:0 12.6px">09:09:07 DEBUG    Cols: 17      Col size: 60    Row size: 80    X position: 240 f</div>
<div class="a mono" style="left:20px;top:59px;font-size:13.33px;line-height:16px;color:#cccccc;white-space:pre;transform:scaleY(1.09);transform-origin:0 12.6px">09:09:07 DEBUG    Getting cable number connected to terminal 18 at page Conexiones</div>
<div class="a mono" style="left:20px;top:75px;font-size:13.33px;line-height:16px;color:#cccccc;white-space:pre;transform:scaleY(1.09);transform-origin:0 12.6px">09:09:07 DEBUG    Getting cable number connected to terminal 19 at page Conexiones</div>
</div>
<div class="a" style="left:837px;top:577px;width:60px;height:49px;background:#252526;"></div>
<svg class="a" style="left:845px;top:589px" width="20" height="20"><circle cx="9.5" cy="9.5" r="7" fill="none" stroke="#3794ff" stroke-width="1.4"/><rect x="8.8" y="8" width="1.5" height="5.5" fill="#3794ff"/><rect x="8.8" y="5.5" width="1.5" height="1.5" fill="#3794ff"/></svg>
<div class="a t" style="left:869px;top:590px;color:#cccccc;font-size:13px;transform:none;">The</div>
<div class="a" style="left:0px;top:607px;width:222px;height:19px;background:#2a2d2e;"></div>
<div class="a" style="left:5px;top:569px;width:10px;height:10px;background:#fff;border:1px solid #ccc;border-radius:2px"></div>
<div class="a t" style="left:21px;top:567px;color:#cccccc;font-size:13px;transform:none;">Raised Exceptions</div>
<div class="a" style="left:5px;top:591px;width:12px;height:12px;background:#0078d4;border-radius:2px"><svg width="12" height="12" style="position:absolute;left:0;top:0"><polyline points="2.5,6.2 5,8.7 9.5,3.2" fill="none" stroke="#fff" stroke-width="1.6"/></svg></div>
<div class="a t" style="left:21px;top:589px;color:#cccccc;font-size:13px;transform:none;">Uncaught Exceptions</div>
<div class="a" style="left:5px;top:613px;width:12px;height:12px;background:#0078d4;border-radius:2px"><svg width="12" height="12" style="position:absolute;left:0;top:0"><polyline points="2.5,6.2 5,8.7 9.5,3.2" fill="none" stroke="#fff" stroke-width="1.6"/></svg></div>
<div class="a t" style="left:21px;top:611px;color:#cccccc;font-size:13px;transform:none;">main.py</div>
<div class="a t" style="left:78px;top:612px;color:#8b8b8b;font-size:12px;transform:none;">src</div>
<svg class="a" style="left:136px;top:608px" width="80" height="18"><path d="M3,15 L4,11 L13,2 L16,5 L7,14 Z" fill="none" stroke="#c5c5c5" stroke-width="1.2"/><path d="M29,5 L37,13 M37,5 L29,13" stroke="#c5c5c5" stroke-width="1.2"/><rect x="49" y="3" width="28" height="17" rx="8.5" fill="#3c3c3c"/><text x="63" y="16" font-family="Liberation Sans" font-size="11" fill="#b0b0b0" text-anchor="middle">544</text></svg>
<svg class="a" style="left:140px;top:549px" width="82" height="12"><path d="M11.5,0 V9.5 M5,3.8 H18.2" stroke="#c5c5c5" stroke-width="1.1" fill="none"/><circle cx="37.6" cy="6.6" r="4.6" fill="#c5c5c5"/><path d="M42,3.5 Q46,2.5 46.5,0" stroke="#c5c5c5" stroke-width="1" fill="none"/><rect x="62" y="0.5" width="8.5" height="8.5" fill="none" stroke="#c5c5c5" stroke-width="1"/><path d="M64.3,2.8 L68.2,6.7 M68.2,2.8 L64.3,6.7" stroke="#c5c5c5" stroke-width="1"/><path d="M70.5,7 H73 V0" stroke="#c5c5c5" stroke-width="1" fill="none"/></svg>
<div class="a" style="left:888px;top:0px;width:348px;height:625px;background:#d9d9d9;"></div>
<div class="a" style="left:888px;top:0px;width:348px;height:1px;background:#efefef;"></div>
<div class="a" style="left:1236px;top:0px;width:1px;height:619px;background:#111;"></div>
<div class="a" style="left:888px;top:625px;width:349px;height:1px;background:#0e5a8a;"></div>
<div class="a" style="left:1236px;top:619px;width:1px;height:7px;background:#0e5a8a;"></div>
<div class="a" style="left:1111px;top:625px;width:10px;height:1px;background:#111;"></div>
<div class="a" style="left:1169px;top:625px;width:10px;height:1px;background:#111;"></div>
<div class="a t" style="left:980px;top:7px;color:#3c3c3c;font-size:13.5px;letter-spacing:0.3px;-webkit-text-stroke:0.35px #3c3c3c;">Terminal-block legend</div>
<svg class="a" style="left:904px;top:8px" width="12" height="8"><polyline points="2.5,2 6,5.2 9.5,2" fill="none" stroke="#333" stroke-width="1.5"/></svg>
<div class="a" style="left:1183px;top:11px;width:7px;height:2px;background:#222;"></div>
<svg class="a" style="left:1205px;top:3px" width="18" height="18"><circle cx="9" cy="9" r="7" fill="#8fb86e"/><path d="M6,6 L12,12 M12,6 L6,12" stroke="#fff" stroke-width="1.8"/></svg>
<div class="a" style="left:907px;top:33px;width:310px;height:546px;background:#fff;"></div>
<div class="a" style="left:906px;top:586px;width:45px;height:26px;border:1px solid #000;background:#d9d9d9;"><div class="a" style="left:0;top:0;width:45px;height:26px;box-sizing:border-box;border-top:1px solid #fff;border-left:1px solid #fff;border-right:1px solid #8c8c8c;border-bottom:1px solid #8c8c8c;"></div><span class="t a" style="left:0;right:0;top:4px;text-align:center">OK</span></div>
<svg class="a" style="left:907px;top:33px" width="310" height="546" viewBox="907 33 310 546"><style>.lt{font:10px "Liberation Sans",sans-serif;fill:#222;letter-spacing:0.8px}.lt2{font:10.5px "Liberation Sans",sans-serif;fill:#222}.ln{font:15px "Liberation Sans",sans-serif;fill:#555}.lx{font:21px "Liberation Sans",sans-serif;fill:#6e6e6e}.lc{font:11px "Liberation Sans",sans-serif;fill:#222}.lr{font:700 28px "Liberation Sans",sans-serif;fill:#cc0000}</style><rect x="1029.8" y="41" width="1.4" height="2" fill="#0000ff"/><rect x="1029.8" y="43" width="1.4" height="4" fill="#ff0000"/><rect x="1029.8" y="47" width="1.4" height="56" fill="#000"/><rect x="1053.8" y="41" width="1.4" height="2" fill="#0000ff"/><rect x="1053.8" y="43" width="1.4" height="4" fill="#ff0000"/><rect x="1053.8" y="47" width="1.4" height="56" fill="#000"/><rect x="1077.8" y="41" width="1.4" height="2" fill="#0000ff"/><rect x="1077.8" y="43" width="1.4" height="4" fill="#ff0000"/><rect x="1077.8" y="47" width="1.4" height="56" fill="#000"/><rect x="1101.8" y="41" width="1.4" height="2" fill="#0000ff"/><rect x="1101.8" y="43" width="1.4" height="4" fill="#ff0000"/><rect x="1101.8" y="47" width="1.4" height="56" fill="#000"/><rect x="1125.8" y="41" width="1.4" height="2" fill="#0000ff"/><rect x="1125.8" y="43" width="1.4" height="4" fill="#ff0000"/><rect x="1125.8" y="47" width="1.4" height="56" fill="#000"/><text transform="translate(1028,74) rotate(-90)" class="lt">10</text><text transform="translate(1052,74) rotate(-90)" class="lt">11</text><text transform="translate(1076,74) rotate(-90)" class="lt">12</text><text transform="translate(1100,74) rotate(-90)" class="lt">20</text><text transform="translate(1124,74) rotate(-90)" class="lt">21</text><rect x="1018" y="101.8" width="121" height="1.4" fill="#000"/><rect x="1018" y="293.8" width="121" height="1.4" fill="#000"/><rect x="1017.8" y="102" width="1.4" height="193" fill="#000"/><rect x="1041.8" y="102" width="1.4" height="193" fill="#000"/><rect x="1065.8" y="102" width="1.4" height="193" fill="#000"/><rect x="1089.8" y="102" width="1.4" height="193" fill="#000"/><rect x="1113.8" y="102" width="1.4" height="193" fill="#000"/><rect x="1137.8" y="102" width="1.4" height="193" fill="#000"/><text transform="translate(1035.5,153) rotate(-90)" class="lt2">3-D4</text><text transform="translate(1059.5,153) rotate(-90)" class="lt2">3-D5</text><text transform="translate(1083.5,153) rotate(-90)" class="lt2">3-D6</text><text transform="translate(1107.5,153) rotate(-90)" class="lt2">3-D7</text><text transform="translate(1131.5,153) rotate(-90)" class="lt2">3-D8</text><text transform="translate(1038.3,285) rotate(-90)" class="ln">1</text><text transform="translate(1062.3,285) rotate(-90)" class="ln">2</text><text transform="translate(1086.3,285) rotate(-90)" class="ln">3</text><text transform="translate(1110.3,285) rotate(-90)" class="ln">4</text><text transform="translate(1134.3,285) rotate(-90)" class="ln">6</text><rect x="1042" y="175.8" width="25" height="1.4" fill="#000"/><rect x="1042" y="218.8" width="25" height="1.4" fill="#000"/><rect x="1029.8" y="185" width="1.4" height="13" fill="#000"/><rect x="1021" y="197.8" width="19" height="1.4" fill="#000"/><rect x="1023" y="200.8" width="15" height="1.4" fill="#000"/><rect x="1026" y="202.8" width="9" height="1.4" fill="#555"/><rect x="1028" y="204.8" width="5" height="1.4" fill="#000"/><rect x="1050.5" y="183.5" width="8" height="29" fill="none" stroke="#000" stroke-width="1"/><rect x="1053.8" y="180" width="1.4" height="37" fill="#000"/><circle cx="1078.5" cy="198.5" r="2.4" fill="none" stroke="#000" stroke-width="1.1"/><circle cx="1102.5" cy="198.5" r="2.4" fill="none" stroke="#000" stroke-width="1.1"/><circle cx="1126.5" cy="198.5" r="2.4" fill="none" stroke="#000" stroke-width="1.1"/><rect x="1103" y="197.8" width="23" height="1.4" fill="#000"/><rect x="958.5" y="126.5" width="53" height="144" fill="none" stroke="#000" stroke-width="1.3"/><rect x="1011.5" y="156.5" width="7" height="84" fill="none" stroke="#000" stroke-width="1.3"/><text transform="translate(993.5,208) rotate(-90)" class="lx">X2</text><rect x="1029.8" y="294" width="1.4" height="85" fill="#000"/><rect x="1053.8" y="294" width="1.4" height="85" fill="#000"/><rect x="1077.8" y="294" width="1.4" height="85" fill="#000"/><rect x="1101.8" y="294" width="1.4" height="55" fill="#000"/><rect x="1101.8" y="349" width="1.4" height="4" fill="#ff0000"/><rect x="1101.8" y="353" width="1.4" height="2" fill="#0000ff"/><rect x="1125.8" y="294" width="1.4" height="55" fill="#000"/><rect x="1125.8" y="349" width="1.4" height="4" fill="#ff0000"/><rect x="1125.8" y="353" width="1.4" height="2" fill="#0000ff"/><text transform="translate(1028,329) rotate(-90)" class="lt">10</text><text transform="translate(1052,329) rotate(-90)" class="lt">11</text><text transform="translate(1076,329) rotate(-90)" class="lt">12</text><text transform="translate(1100,329) rotate(-90)" class="lt">20</text><text transform="translate(1124,329) rotate(-90)" class="lt">21</text><rect x="1030" y="377.8" width="49" height="1.4" fill="#000"/><text transform="translate(1027.5,373.5) rotate(-90) scale(1,0.86)" class="lc">yl/gn</text><line x1="1028.2" y1="363.7" x2="1033.6" y2="369.1" stroke="#000" stroke-width="1.3"/><text transform="translate(1051.5,373.5) rotate(-90) scale(1,0.86)" class="lc">rd</text><line x1="1052.2" y1="363.7" x2="1057.6" y2="369.1" stroke="#000" stroke-width="1.3"/><text transform="translate(1075.5,373.5) rotate(-90) scale(1,0.86)" class="lc">bk</text><line x1="1076.2" y1="363.7" x2="1081.6" y2="369.1" stroke="#000" stroke-width="1.3"/><rect x="1053.8" y="378" width="1.4" height="97" fill="#000"/><text transform="translate(1051,432.5) rotate(-90) scale(1,0.86)" class="lc">-W2</text><rect x="1030" y="473.8" width="49" height="1.4" fill="#000"/><rect x="1029.8" y="474" width="1.4" height="79" fill="#000"/><rect x="1029.8" y="553" width="1.4" height="4" fill="#ff0000"/><rect x="1029.8" y="557" width="1.4" height="2" fill="#0000ff"/><rect x="1053.8" y="474" width="1.4" height="79" fill="#000"/><rect x="1053.8" y="553" width="1.4" height="4" fill="#ff0000"/><rect x="1053.8" y="557" width="1.4" height="2" fill="#0000ff"/><rect x="1077.8" y="474" width="1.4" height="79" fill="#000"/><rect x="1077.8" y="553" width="1.4" height="4" fill="#ff0000"/><rect x="1077.8" y="557" width="1.4" height="2" fill="#0000ff"/><text transform="translate(1027.5,510) rotate(-90) scale(1,0.86)" class="lc">yl/gn</text><line x1="1028.2" y1="501.7" x2="1033.6" y2="507.1" stroke="#000" stroke-width="1.3"/><text transform="translate(1051.5,510) rotate(-90) scale(1,0.86)" class="lc">rd</text><line x1="1052.2" y1="501.7" x2="1057.6" y2="507.1" stroke="#000" stroke-width="1.3"/><text transform="translate(1075.5,510) rotate(-90) scale(1,0.86)" class="lc">bk</text><line x1="1076.2" y1="501.7" x2="1081.6" y2="507.1" stroke="#000" stroke-width="1.3"/><line x1="1015.6" y1="207.4" x2="962.4" y2="339" stroke="#cc0000" stroke-width="2"/><line x1="1026.8" y1="264.6" x2="969.7" y2="421.2" stroke="#cc0000" stroke-width="2"/><line x1="1132" y1="64.4" x2="1180.6" y2="187.9" stroke="#cc0000" stroke-width="2"/><line x1="1179.8" y1="228.5" x2="1134.4" y2="335" stroke="#cc0000" stroke-width="2"/><line x1="1080.3" y1="346.3" x2="1127.7" y2="401.5" stroke="#cc0000" stroke-width="2"/><line x1="1055.7" y1="432" x2="1126" y2="464.7" stroke="#cc0000" stroke-width="2"/><line x1="1079.6" y1="519.2" x2="1125.2" y2="531.5" stroke="#cc0000" stroke-width="2"/><text transform="translate(971.5,116.8) scale(1,1.08)" class="lr">B</text><text transform="translate(927.5,210) scale(1,1.08)" class="lr">A</text><text transform="translate(1175.5,219) scale(1,1.08)" class="lr">G</text><text transform="translate(925,370.4) scale(1,1.08)" class="lr">CxD</text><text transform="translate(928,450.9) scale(1,1.08)" class="lr" textLength="47" lengthAdjust="spacingAndGlyphs">ExF</text><text transform="translate(1131.5,424.6) scale(1,1.08)" class="lr">H</text><text transform="translate(1131.5,480.8) scale(1,1.08)" class="lr">I</text><path d="M1134.6,520.3 H1139 V539.5 Q1139,547 1131.5,547 H1130.5 V543 Q1134.6,543 1134.6,538.5 Z" fill="#cc0000"/></svg>
</body></html>
